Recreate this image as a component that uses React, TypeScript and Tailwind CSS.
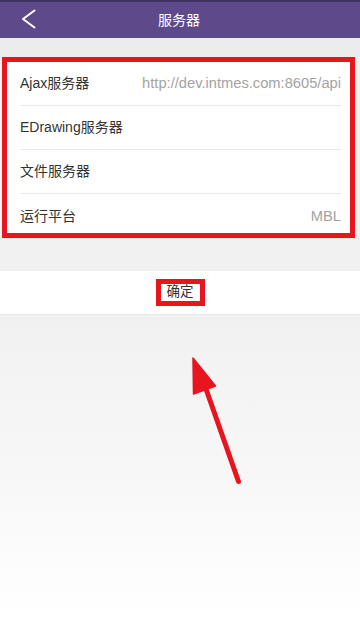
import React from 'react';

const font = { fontFamily: '"Liberation Sans", "Noto Sans CJK SC", sans-serif' };

interface RowProps {
  label: string;
  value?: string;
  last?: boolean;
}

const Row: React.FC<RowProps> = ({ label, value, last }) => (
  <div className={last ? 'flex h-[39px] items-center pt-[5px]' : 'flex h-[44px] items-center border-b border-[#e9e9e9]'}>
    <span className="text-[14px] text-[#333333]">{label}</span>
    {value && <span className="ml-auto text-[14.7px] text-[#a3a3a3]">{value}</span>}
  </div>
);

export default function App() {
  return (
    <div className="relative flex h-[619px] w-[360px] flex-col overflow-hidden bg-white" style={font}>
      {/* top bar */}
      <div className="flex h-[38px] items-center border-t-2 border-[#3f3260] bg-[#5e4a8b]">
        <svg width="16" height="20" viewBox="0 0 16 20" className="ml-[20px] -mt-[2px]">
          <path d="M14.5 1.5 L3 10 L14.5 18.5" fill="none" stroke="white" strokeWidth="2" strokeLinecap="round" strokeLinejoin="round" />
        </svg>
        <span className="ml-[122px] text-[14px] text-white">服务器</span>
      </div>

      {/* gap */}
      <div className="h-[19px] bg-[#ececec]" />

      {/* server list in red frame */}
      <div className="bg-[#f1f1f1] pl-[2px] pr-[5px]">
        <div className="border-[5px] border-[#e8141e] bg-white pl-[13px] pr-[9px]">
          <Row label="Ajax服务器" value="http://dev.intmes.com:8605/api" />
          <Row label="EDrawing服务器" />
          <Row label="文件服务器" />
          <Row label="运行平台" value="MBL" last />
        </div>
      </div>

      <div className="h-[33px] border-t border-[#e6e6e6] bg-[#f1f1f1]" />

      {/* confirm row */}
      <div className="flex h-[44px] items-center justify-center border-b border-[#e8e8e8] bg-white">
        <div className="flex h-[27px] w-[49px] items-center justify-center border-[5px] border-[#e8141e] bg-white">
          <span className="text-[13.5px] text-[#333333]">确定</span>
        </div>
      </div>

      {/* faded remaining area */}
      <div className="flex-1 bg-gradient-to-b from-[#f1f1f1] via-[#f7f7f7] to-white" />

      {/* annotation arrow */}
      <svg className="absolute left-0 top-0" width="360" height="619" viewBox="0 0 360 619">
        <line x1="238.5" y1="481.5" x2="206" y2="389" stroke="#e8141e" strokeWidth="5" strokeLinecap="round" />
        <polygon points="193,358 193.5,394 215.5,386" fill="#e8141e" stroke="#e8141e" strokeWidth="1.5" strokeLinejoin="round" />
      </svg>
    </div>
  );
}
